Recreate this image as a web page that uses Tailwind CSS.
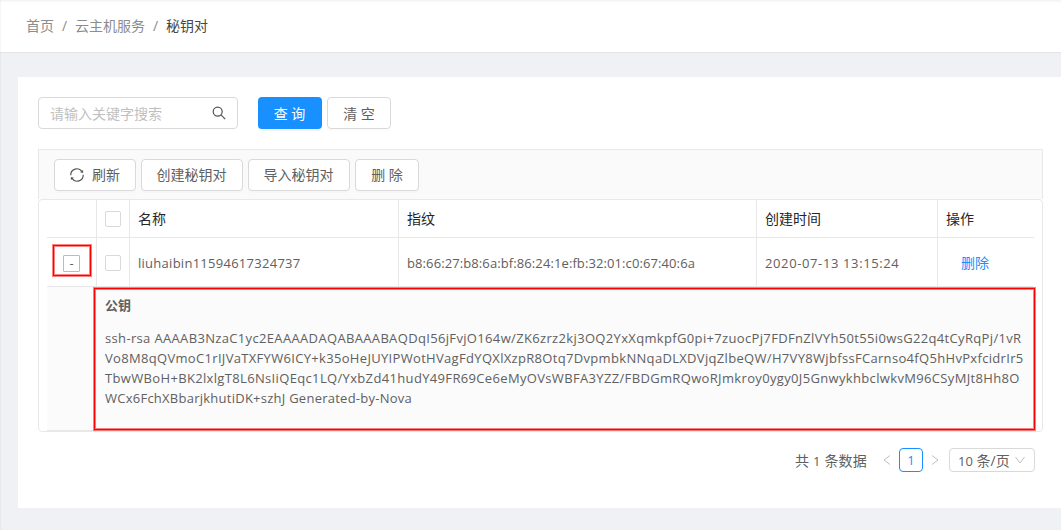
<!DOCTYPE html>
<html lang="zh-CN">
<head>
<meta charset="utf-8">
<title>秘钥对</title>
<script src="https://cdn.jsdelivr.net/npm/@tailwindcss/browser@4"></script>
</head>
<body class="h-[530px] overflow-hidden bg-[#f0f1f5] font-['Open_Sans','Noto_Sans_CJK_SC',sans-serif] text-[14px] leading-[21px] text-[#606060]">
<div class="relative h-[530px] w-[1061px] overflow-hidden">
  <header class="flex h-[53px] items-center border-b border-[#e4e4e4] bg-white pb-px pl-[26px] text-[#8c8c8c] shadow-[inset_0_3px_3px_-2px_#eeeeee]">
    <span>首页</span><span class="w-[21px] text-center">/</span><span>云主机服务</span><span class="w-[21px] text-center">/</span><span class="text-[#484848]">秘钥对</span>
  </header>
  <main class="mt-6 ml-[18px] h-[431px] bg-white pt-5 pl-5">
    <div class="flex h-8">
      <div class="flex w-[200px] items-center justify-between rounded-[4px] border border-[#d9d9d9] pr-[11px] pl-[11px] text-[#bfbfbf]">
        <span>请输入关键字搜索</span>
        <svg class="size-[14px]" viewBox="0 0 14 14" fill="none" stroke="#555" stroke-width="1.25"><circle cx="5.7" cy="5.6" r="4.5"/><path d="M9 8.9l4.2 4.2"/></svg>
      </div>
      <button class="ml-5 w-16 rounded-[4px] bg-[#1890ff] pr-px text-white shadow-[0_2px_0_rgba(0,0,0,0.04)]">查 询</button>
      <button class="ml-[5px] w-16 rounded-[4px] border border-[#d9d9d9] shadow-[0_2px_0_rgba(0,0,0,0.015)]">清 空</button>
    </div>
    <div class="mt-5 flex h-[50px] w-[1005px] gap-[5px] border border-b-0 border-[#e8e8e8] bg-[#fafafa] pt-[9px] pl-[15px]">
      <button class="flex h-8 w-[82px] items-center rounded-[4px] border border-[#d9d9d9] bg-white pl-[15px] shadow-[0_2px_0_rgba(0,0,0,0.015)]">
        <svg class="mr-2 size-[14px]" viewBox="0 0 14 14" fill="none" stroke="#555" stroke-width="1.2"><path d="M.8 7.2A6.100 6.100 0 0 1 12 3.6M13.200 6.800A6.100 6.100 0 0 1 2 10.400"/><path d="M13.100 2v2.900l-3-.6zM.9 12V9.100l3 .6z" fill="#555" stroke="none"/></svg><span class="pb-0.5">刷新</span>
      </button>
      <button class="h-8 w-[102px] rounded-[4px] border border-[#d9d9d9] bg-white pr-px pb-0.5 shadow-[0_2px_0_rgba(0,0,0,0.015)]">创建秘钥对</button>
      <button class="h-8 w-[102px] rounded-[4px] border border-[#d9d9d9] bg-white pr-px pb-0.5 shadow-[0_2px_0_rgba(0,0,0,0.015)]">导入秘钥对</button>
      <button class="h-8 w-16 rounded-[4px] border border-[#d9d9d9] bg-white pb-0.5 shadow-[0_2px_0_rgba(0,0,0,0.015)]">删 除</button>
    </div>
    <section class="h-[233px] w-[1005px] rounded-[4px] border border-[#e8e8e8] px-2">
      <div class="grid h-[38px] grid-cols-[50px_33px_269px_358px_181px_96px] border-b border-[#e8e8e8] text-[#262626] *:flex *:items-center *:border-[#e8e8e8] *:pl-2">
        <div class="border-r"></div>
        <div class="border-r"><i class="size-4 rounded-[2px] border border-[#d9d9d9]"></i></div>
        <div class="border-r">名称</div><div class="border-r">指纹</div><div class="border-r">创建时间</div><div>操作</div>
      </div>
      <div class="grid h-[49px] grid-cols-[50px_33px_269px_358px_181px_96px] border-b border-[#e8e8e8] *:flex *:items-center *:border-[#e8e8e8] *:pl-2">
        <div class="border-r"><i class="ml-2 flex size-[17px] translate-y-px items-center justify-center rounded-[1px] border border-[#b5bcc5] text-[13px] leading-none not-italic">-</i></div>
        <div class="border-r pt-0.5"><i class="size-4 rounded-[2px] border border-[#d9d9d9]"></i></div>
        <div class="border-r pt-0.5 text-[13px] tracking-[0.27px]">liuhaibin11594617324737</div>
        <div class="border-r pt-0.5 text-[13px] tracking-[0.1px]">b8:66:27:b8:6a:bf:86:24:1e:fb:32:01:c0:67:40:6a</div>
        <div class="border-r pt-0.5 text-[13px] tracking-[0.62px]">2020-07-13 13:15:24</div>
        <div class="text-[#1890ff]"><span class="ml-[15px]">删除</span></div>
      </div>
      <div class="h-[144px] border-b border-[#e8e8e8] bg-[#fbfbfb] pt-2 pl-[58px]">
        <div class="text-[13px] leading-5 font-bold">公钥</div>
        <div class="mt-[13px] text-[13px] leading-5 whitespace-nowrap">
          <div class="tracking-[0.342px]">ssh-rsa AAAAB3NzaC1yc2EAAAADAQABAAABAQDqI56jFvjO164w/ZK6zrz2kj3OQ2YxXqmkpfG0pi+7zuocPj7FDFnZlVYh50t55i0wsG22q4tCyRqPj/1vR</div>
          <div class="tracking-[0.32px]">Vo8M8qQVmoC1rIJVaTXFYW6ICY+k35oHeJUYIPWotHVagFdYQXlXzpR8Otq7DvpmbkNNqaDLXDVjqZlbeQW/H7VY8WjbfssFCarnso4fQ5hHvPxfcidrIr5</div>
          <div class="tracking-[0.342px]">TbwWBoH+BK2lxlgT8L6NsIiQEqc1LQ/YxbZd41hudY49FR69Ce6eMyOVsWBFA3YZZ/FBDGmRQwoRJmkroy0ygy0J5GnwykhbclwkvM96CSyMJt8Hh8O</div>
          <div class="tracking-[0.25px]">WCx6FchXBbarjkhutiDK+szhJ Generated-by-Nova</div>
        </div>
      </div>
    </section>
    <footer class="mt-4 flex h-6 w-[997px] items-center justify-end">
      <span class="mr-4 pt-0.5 tracking-[0.2px]">共 <span class="text-[13px]">1</span> 条数据</span>
      <svg class="h-3 w-2" viewBox="0 0 8 12" fill="none" stroke="#bfbfbf"><path d="M7 1.5L1 6l6 4.5"/></svg>
      <span class="mx-2 flex size-6 items-center justify-center rounded-[4px] border border-[#1890ff] text-[13px] text-[#1890ff]">1</span>
      <svg class="h-3 w-2" viewBox="0 0 8 12" fill="none" stroke="#bfbfbf"><path d="M1 1.5L7 6l-6 4.5"/></svg>
      <div class="ml-[10px] flex h-6 w-[86px] items-center justify-between rounded-[4px] border border-[#d9d9d9] pr-[9px] pl-2"><span class="pt-0.5"><span class="text-[13px]">10</span> 条/页</span>
        <svg class="h-2 w-[10px]" viewBox="0 0 10 8" fill="none" stroke="#bfbfbf"><path d="M.5 1L5 7l4.500-6"/></svg></div>
    </footer>
  </main>
  <div class="pointer-events-none absolute top-0 left-0 h-full w-px bg-black/3"></div>
  <div class="pointer-events-none absolute top-[245px] left-[53px] h-[31px] w-[38px] border border-[#ff0000] shadow-[0_0_0_1px_#ff000080,inset_0_0_0_1px_#ff000080]"></div>
  <div class="pointer-events-none absolute top-[288px] left-[94px] h-[142px] w-[941px] border border-[#ff0000] shadow-[0_0_0_1px_#ff000080,inset_0_0_0_1px_#ff000080]"></div>
</div>
</body>
</html>
